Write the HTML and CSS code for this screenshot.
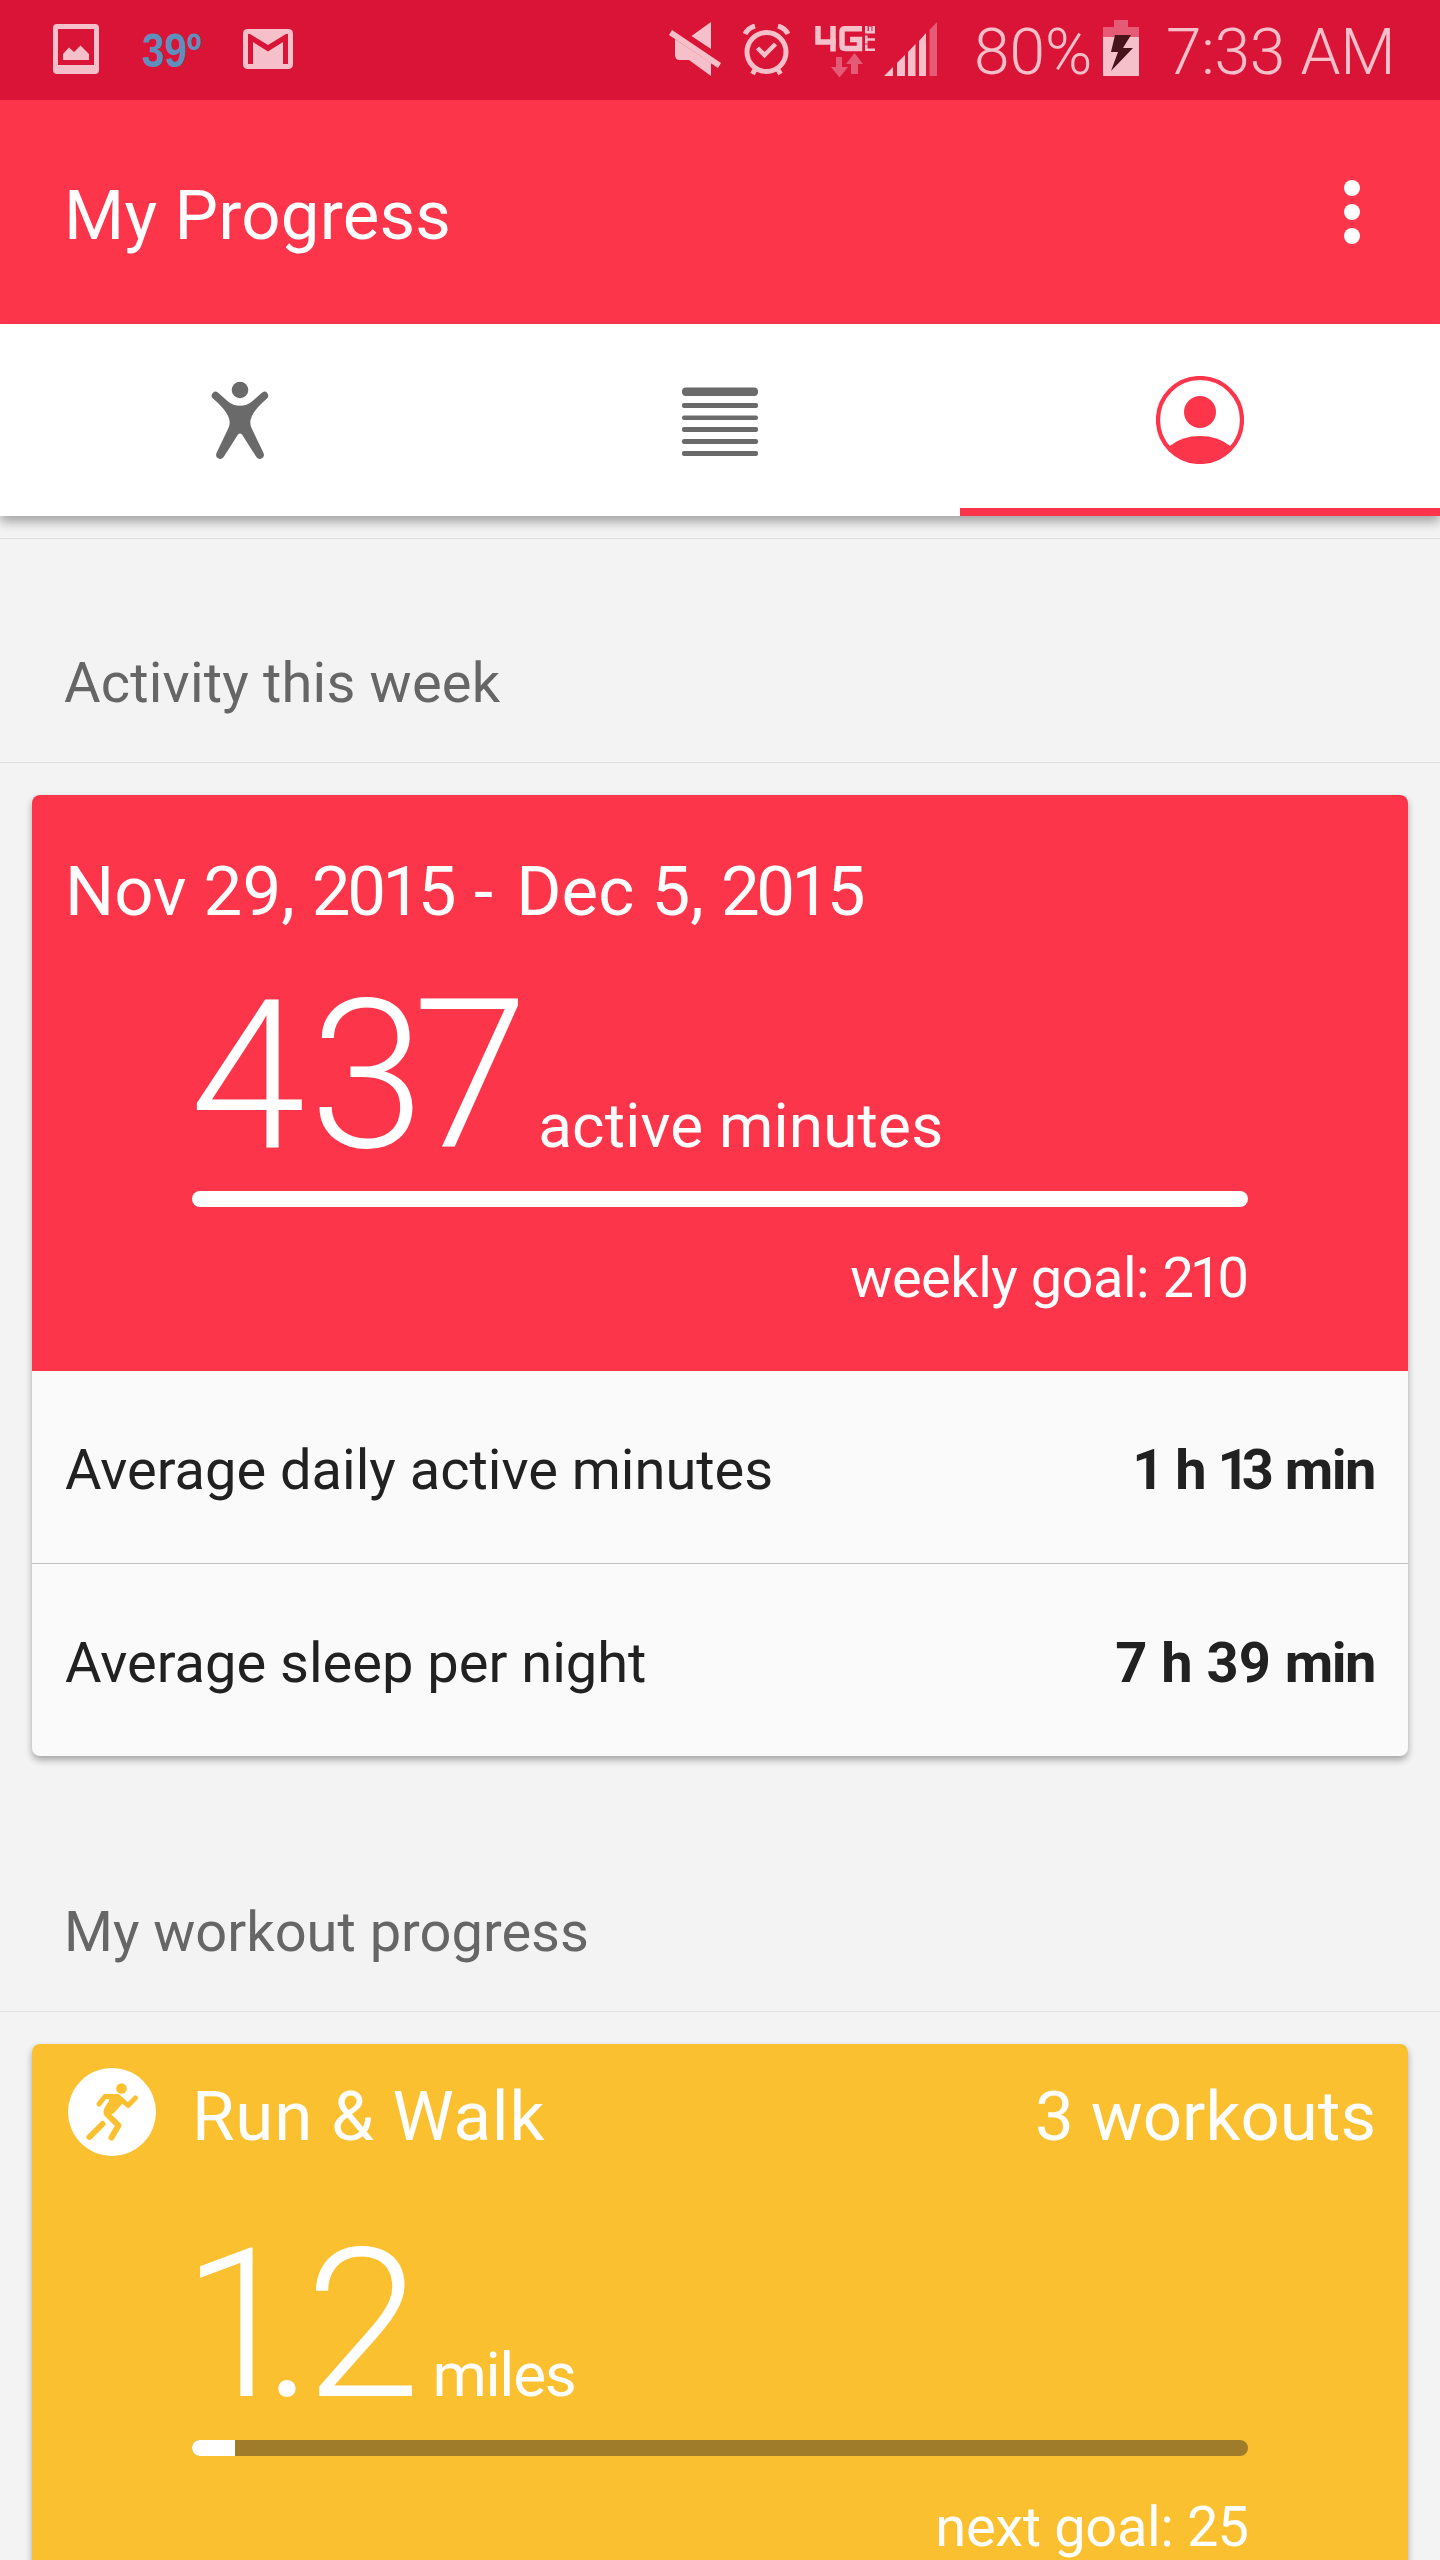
FILE: index.html
```html
<!DOCTYPE html>
<html lang="en">
<head>
<meta charset="utf-8">
<title>My Progress</title>
<link rel="stylesheet" href="styles.css">
</head>
<body>
<div class="screen">
  <header class="status-bar">
    <div class="status-left">
      <svg class="ico-photo" width="46" height="50" viewBox="0 0 46 50"><path fill="#f6c0ca" fill-rule="evenodd" d="M4 0H42Q46 0 46 4V46Q46 50 42 50H4Q0 50 0 46V4Q0 0 4 0ZM5 5V41H41V5Z"/><path fill="#f6c0ca" d="M10 36V30L16 23.500L21 28L27.500 21.500L36 30V36Z"/></svg>
      <span class="temperature">39º</span>
      <svg class="ico-mail" width="50" height="40" viewBox="0 0 50 40"><rect width="50" height="40" rx="4.500" fill="#f6c0ca"/><path fill="#d91436" d="M5 35V5H7L25 16L43 5H45V35H40V13L25 22.500L10 13V35Z"/></svg>
    </div>
    <div class="status-right">
      <svg class="ico-mute" width="52" height="54" viewBox="0 0 52 54"><g fill="#f6c0ca"><path d="M42 0V27L22.500 14Z"/><path d="M6 17L42 41V54L20 38H11Q6 38 6 33Z"/><path d="M3 8L52 41L49 46L0 13Z"/></g></svg>
      <svg class="ico-alarm" width="47" height="52" viewBox="0 0 47 52"><g fill="none" stroke="#f6c0ca"><circle cx="23.500" cy="28" r="19.500" stroke-width="5"/><path stroke-width="4.500" d="M14.500 24L21.500 31L32.500 20"/><path stroke-width="5" d="M2 10Q5 4 12 2M45 10Q42 4 35 2M13 44L9.500 50M34 44L37.500 50"/></g></svg>
      <svg class="ico-lte" width="61" height="52" viewBox="0 0 61 52"><g fill="none" stroke="#f6c0ca" stroke-width="5.500"><path d="M3 0V16H21M18 0V25.500"/><path d="M47 2.800H30Q27 2.800 27 6V19Q27 22.500 30 22.500H44.500V13.500H35"/></g><path fill="none" stroke="#f6c0ca" stroke-width="2.600" d="M50 23.700H60M51.300 18.500V25M50 13.500H60M51.300 9.500V17.500M50 6.200H60M51.300 0V7.500M55.200 0.500V6.500M58.700 0V7.500"/><path fill="#e55b76" d="M21 31H27V41H33L24.500 51.500L16 41H21ZM36 48V38H31L39.500 27L48 38H43V48Z"/></svg>
      <svg class="ico-signal" width="53" height="54" viewBox="0 0 53 54"><path fill="#f6c0ca" d="M0 54L9 45V54ZM13 54V41L21 33V54ZM24 54V30L31.500 22V54ZM35 54V19L42 11V54Z"/><path fill="#e55b76" d="M45.500 54V8L53 0V54Z"/></svg>
      <span class="battery-level">80%</span>
      <svg class="ico-battery" width="36" height="56" viewBox="0 0 36 56"><path fill="#e55b76" d="M11 0H25V7H36V17H0V7H11Z"/><path fill="#f6c0ca" d="M0 17H36V56H0Z"/><path fill="#47141c" d="M12 15H28L20 28H30L8 51L15 32H8Z"/></svg>
      <span class="clock">7:33 AM</span>
    </div>
  </header>
  <div class="app-bar">
    <h1 class="app-title">My Progress</h1>
    <button class="menu" aria-label="Menu"><i class="dot"></i><i class="dot"></i><i class="dot"></i></button>
  </div>
  <nav class="tabs">
    <a class="tab"><svg width="60" height="80" viewBox="0 0 60 80"><g fill="#6a6a6a"><circle cx="30" cy="10" r="8.300"/><path d="M9 13.500Q5.500 10 2.800 13T3 18.500Q20 33 19.700 43Q19.600 46 18 49L6.500 73Q5 77 8.500 78.500T14 76.500L28 54.500Q30 52.500 32 54.500L46 76.500Q48 80 51.500 78.500T53.500 73L42 49Q40.400 46 40.300 43Q40 33 57 18.500Q59.500 16 57.200 13T51 13.500L42 21.500Q37 25.700 30 25.700T18 21.500Z"/></g></svg></a>
    <a class="tab tab-list"><svg width="78" height="70" viewBox="0 0 78 70"><g fill="#6a6a6a"><rect x="1" y="0.500" width="76" height="8.500" rx="4"/><rect x="1" y="16" width="76" height="5" rx="2"/><rect x="1" y="28.500" width="76" height="4.500" rx="2"/><rect x="1" y="40" width="76" height="5" rx="2"/><rect x="1" y="52" width="76" height="5" rx="2"/><rect x="1" y="64" width="76" height="5" rx="2"/></g></svg></a>
    <a class="tab tab-active"><svg width="88" height="88" viewBox="0 0 88 88"><circle cx="44" cy="44" r="42" fill="none" stroke="#fd354b" stroke-width="4.200"/><circle cx="44" cy="36" r="16" fill="#fd354b"/><path fill="#fd354b" d="M12.500 71.500L14.500 69.500Q26 60 44 60T73.500 69.500L75.500 71.500A42 42 0 0 1 12.500 71.500Z"/></svg></a>
  </nav>
  <main class="content">
    <h2 class="section-title section-first">Activity this week</h2>
    <section class="card">
      <div class="hero hero-red">
        <div class="hero-head"><span class="hero-date">Nov 29, <span class="year">2015</span> <span class="dash">-</span> Dec 5, <span class="year">2015</span></span></div>
        <div class="metric"><span class="number"><span class="kern-4">4</span><span class="kern-3">3</span>7</span><span class="unit">active minutes</span></div>
        <div class="bar"><div class="bar-fill" style="width:100%"></div></div>
        <p class="goal">weekly goal: <span class="target">210</span></p>
      </div>
      <div class="row"><span class="label">Average daily active minutes</span><strong class="value value-daily">1 h <span class="teen">1</span>3 <span class="min">min</span></strong></div>
      <div class="row"><span class="label">Average sleep per night</span><strong class="value">7 h 39 <span class="min">min</span></strong></div>
    </section>
    <h2 class="section-title">My workout progress</h2>
    <section class="card">
      <div class="hero hero-yellow">
        <div class="hero-head">
          <svg class="runner" width="88" height="88" viewBox="0 0 88 88"><circle cx="44" cy="44" r="44" fill="#fff"/><g fill="none" stroke="#fbc02f" stroke-linecap="round" stroke-linejoin="round"><circle cx="53.500" cy="20.500" r="5.300" fill="#fbc02f" stroke="none"/><path stroke-width="5" d="M31 36L37 28.500L50 28.500L60 37.500L67.500 30"/><path stroke-width="6" d="M21.500 69L34.500 56"/><path stroke-width="6" d="M39 46L50.500 57.500L43.500 69.500"/></g><path fill="#fbc02f" d="M40 27H50L56 34L46 45L40 48Q35 47 35.500 43Q36 40 41 33Z"/></svg>
          <span class="workout-name">Run &amp; Walk</span><span class="workout-count">3 workouts</span>
        </div>
        <div class="metric metric-decimal"><span class="number"><span class="kern-1">1</span><span class="kern-dot">.</span>2</span><span class="unit unit-miles">miles</span></div>
        <div class="bar"><div class="bar-fill" style="width:4.080%"></div></div>
        <p class="goal goal-next">next goal: <span class="count">25</span></p>
      </div>
    </section>
  </main>
</div>
</body>
</html>
```
FILE: styles.css
```css
* { box-sizing: border-box; }
body { margin: 0; background: #f3f3f3; font-family: Roboto, "Liberation Sans", sans-serif; }
h1, h2, p { margin: 0; font-weight: 400; }
svg { display: block; flex: none; }
.screen { width: 1440px; height: 2560px; overflow: hidden; background: #f3f3f3; }

.status-bar { display: flex; justify-content: space-between; height: 100px; padding: 0 46px 0 53px; background: #d91436; color: #f6c0ca; }
.status-left, .status-right { display: flex; align-items: flex-start; }
.ico-photo { margin-top: 24px; }
.temperature { width: 62px; margin: 22px 0 0 43px; color: #5f8fbd; font: 700 48px/58px "Liberation Sans", Arial, sans-serif; white-space: nowrap; transform: scaleX(.84); transform-origin: left; }
.ico-mail { margin: 29px 0 0 39px; }
.ico-mute { margin-top: 22px; }
.ico-alarm { margin: 24px 0 0 22px; }
.ico-lte { margin: 26px 0 0 25px; }
.ico-signal { margin: 22px 0 0 8px; }
.battery-level, .clock { font-size: 64px; font-weight: 300; line-height: 60px; margin-top: 23px; white-space: nowrap; }
.battery-level { width: 119px; margin-left: 37px; }
.ico-battery { margin: 20px 0 0 10px; }
.clock { width: 228px; margin-left: 27px; letter-spacing: -.2px; }

.app-bar { display: flex; justify-content: space-between; align-items: center; height: 224px; padding: 0 72px 0 64px; background: #fd354b; color: #fff; }
.app-title { padding-top: 8px; font-size: 69px; line-height: 80px; letter-spacing: .2px; }
.menu { display: flex; flex-direction: column; gap: 8px; padding: 0; border: 0; background: none; width: 32px; align-items: center; }
.dot { width: 16px; height: 16px; border-radius: 50%; background: #fff; }

.tabs { display: grid; grid-template-columns: repeat(3, 1fr); height: 192px; background: #fff; box-shadow: 0 6px 10px rgba(0, 0, 0, .32); }
.tab { display: flex; align-items: center; justify-content: center; border-bottom: 8px solid transparent; padding-top: 8px; }
.tab-list { padding-top: 11px; }
.tab-active { border-color: #fd354b; }

.section-title { height: 224px; padding: 128px 64px 0; border-bottom: 1px solid #dfdfdf; color: #666; font-size: 56px; line-height: 66px; }
.section-first { height: 225px; margin-top: 22px; border-top: 1px solid #dfdfdf; padding-top: 111px; letter-spacing: .2px; }
.card { margin: 32px 32px 0; border-radius: 8px; overflow: hidden; background: #fafafa; box-shadow: 0 4px 7px rgba(0, 0, 0, .32); }
.card + .section-title { height: 256px; padding-top: 143px; }
.hero { height: 576px; padding: 0 33px; color: #fff; }
.hero-red { background: #fd354b; }
.hero-yellow { background: #fbc02f; }
.hero-head { display: flex; height: 156px; font-size: 69px; line-height: 80px; }
.hero-date { margin: 57px 0 0; white-space: nowrap; }
.year { letter-spacing: -3.500px; }
.dash { margin: 0 6px 0 4px; }
.runner { margin: 24px 0 0 3px; }
.workout-name { margin: 33px 0 0 36px; letter-spacing: .8px; }
.workout-count { margin: 33px -1px 0 auto; }
.metric { display: flex; align-items: baseline; height: 240px; padding-left: 125px; }
.metric-decimal { padding-left: 117px; }
.number { font-size: 208px; font-weight: 300; line-height: 250px; letter-spacing: -3px; }
.kern-4 { letter-spacing: 4px; }
.kern-3 { letter-spacing: -12px; }
.kern-1 { letter-spacing: -34px; }
.kern-dot { letter-spacing: -8px; }
.unit { margin-left: 13px; font-size: 62px; letter-spacing: .2px; }
.unit-miles { margin-left: 15px; letter-spacing: -1.300px; }
.bar { width: 1056px; height: 16px; margin: 0 0 0 127px; border-radius: 8px; overflow: hidden; background: #9e7c29; }
.bar-fill { height: 16px; background: #fff; }
.goal { margin: 38px 131px 0 0; text-align: right; font-size: 56px; line-height: 66px; letter-spacing: -.5px; }
.target { letter-spacing: -4px; }
.hero .goal { margin-right: 130px; }
.hero .goal-next { margin-right: 127px; letter-spacing: -.350px; }
.count { letter-spacing: -1px; }
.row { display: flex; align-items: center; justify-content: space-between; height: 192px; padding: 6px 33px 0; color: #212121; font-size: 56px; }
.row + .row { height: 193px; border-top: 1px solid #c2c2c2; }
.value { font-weight: 700; }
.value-daily { word-spacing: -3px; }
.teen { letter-spacing: -8px; }
.min { letter-spacing: -1.500px; }
```
